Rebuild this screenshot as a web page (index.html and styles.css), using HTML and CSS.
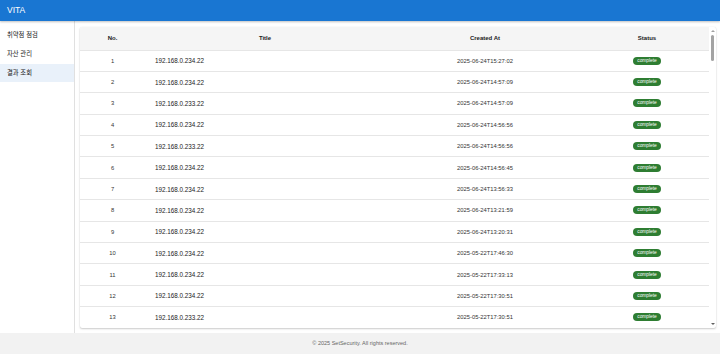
FILE: index.html
```html
<!DOCTYPE html>
<html lang="ko">
<head>
  <meta charset="UTF-8" />
  <meta name="viewport" content="width=device-width, initial-scale=1" />
  <title>VITA</title>
  <link rel="stylesheet" href="styles.css">
</head>
<body>
  <header class="appbar">VITA</header>

  <div class="layout">
    <nav class="sidebar">
      <a class="nav-item">취약점 점검</a>
      <a class="nav-item">자산 관리</a>
      <a class="nav-item active">결과 조회</a>
    </nav>

    <main class="main">
      <div class="table-box">
        <div class="table-scroll">
          <table class="results">
            <thead>
              <tr>
                <th class="col-no">No.</th>
                <th class="col-title">Title</th>
                <th class="col-date">Created At</th>
                <th class="col-status">Status</th>
              </tr>
            </thead>
            <tbody>
              <tr><td class="col-no">1</td><td class="col-title">192.168.0.234.22</td><td class="col-date">2025-06-24T15:27:02</td><td class="col-status"><span class="chip">complete</span></td></tr>
              <tr><td class="col-no">2</td><td class="col-title">192.168.0.234.22</td><td class="col-date">2025-06-24T14:57:09</td><td class="col-status"><span class="chip">complete</span></td></tr>
              <tr><td class="col-no">3</td><td class="col-title">192.168.0.233.22</td><td class="col-date">2025-06-24T14:57:09</td><td class="col-status"><span class="chip">complete</span></td></tr>
              <tr><td class="col-no">4</td><td class="col-title">192.168.0.234.22</td><td class="col-date">2025-06-24T14:56:56</td><td class="col-status"><span class="chip">complete</span></td></tr>
              <tr><td class="col-no">5</td><td class="col-title">192.168.0.233.22</td><td class="col-date">2025-06-24T14:56:56</td><td class="col-status"><span class="chip">complete</span></td></tr>
              <tr><td class="col-no">6</td><td class="col-title">192.168.0.234.22</td><td class="col-date">2025-06-24T14:56:45</td><td class="col-status"><span class="chip">complete</span></td></tr>
              <tr><td class="col-no">7</td><td class="col-title">192.168.0.234.22</td><td class="col-date">2025-06-24T13:56:33</td><td class="col-status"><span class="chip">complete</span></td></tr>
              <tr><td class="col-no">8</td><td class="col-title">192.168.0.234.22</td><td class="col-date">2025-06-24T13:21:59</td><td class="col-status"><span class="chip">complete</span></td></tr>
              <tr><td class="col-no">9</td><td class="col-title">192.168.0.234.22</td><td class="col-date">2025-06-24T13:20:31</td><td class="col-status"><span class="chip">complete</span></td></tr>
              <tr><td class="col-no">10</td><td class="col-title">192.168.0.234.22</td><td class="col-date">2025-05-22T17:46:30</td><td class="col-status"><span class="chip">complete</span></td></tr>
              <tr><td class="col-no">11</td><td class="col-title">192.168.0.234.22</td><td class="col-date">2025-05-22T17:33:13</td><td class="col-status"><span class="chip">complete</span></td></tr>
              <tr><td class="col-no">12</td><td class="col-title">192.168.0.234.22</td><td class="col-date">2025-05-22T17:30:51</td><td class="col-status"><span class="chip">complete</span></td></tr>
              <tr><td class="col-no">13</td><td class="col-title">192.168.0.233.22</td><td class="col-date">2025-05-22T17:30:51</td><td class="col-status"><span class="chip">complete</span></td></tr>
            </tbody>
          </table>
        </div>
        <div class="scrollbar">
          <span class="arrow up"></span>
          <div class="track"><span class="thumb"></span></div>
          <span class="arrow down"></span>
        </div>
      </div>
    </main>
  </div>

  <footer class="footer">© 2025 SetSecurity. All rights reserved.</footer>
</body>
</html>
```

FILE: styles.css
```css
* { box-sizing: border-box; }
html, body { height: 100%; }
body {
  margin: 0;
  font-family: "Liberation Sans", Arial, "Noto Sans CJK KR", sans-serif;
  color: #222;
  background: #fff;
  display: flex;
  flex-direction: column;
}
.appbar {
  height: 21px;
  flex: none;
  background: #1976d2;
  color: #fff;
  font-size: 8.5px;
  line-height: 21px;
  padding-left: 7px;
  box-shadow: 0 1px 2px rgba(0, 0, 0, 0.25);
  position: relative;
  z-index: 2;
}
.layout {
  flex: 1;
  display: flex;
  min-height: 0;
}
.sidebar {
  width: 75px;
  flex: none;
  border-right: 1px solid #e0e0e0;
  padding-top: 5px;
  display: flex;
  flex-direction: column;
}
.nav-item {
  height: 18px;
  line-height: 18px;
  padding-left: 7px;
  margin-bottom: 1px;
  font-size: 6.3px;
  color: #222;
  font-family: "Noto Sans CJK KR", sans-serif;
}
.nav-item.active { background: #e9f1fa; }
.main {
  flex: 1;
  min-width: 0;
  padding: 6px 4px 5px 5px;
  display: flex;
}
.table-box {
  flex: 1;
  display: flex;
  overflow: hidden;
  border-radius: 2px;
  box-shadow: 0 1px 2px rgba(0, 0, 0, 0.2), 0 0 1px rgba(0, 0, 0, 0.12);
}
.table-scroll {
  flex: 1;
  min-width: 0;
}
.scrollbar {
  width: 7px;
  flex: none;
  display: flex;
  flex-direction: column;
  align-items: center;
  padding: 2px 0;
}
.arrow {
  width: 0;
  height: 0;
  border-left: 2px solid transparent;
  border-right: 2px solid transparent;
}
.arrow.up { border-bottom: 2px solid #a0a0a0; margin: 1px 0 3px; }
.arrow.down { border-top: 2px solid #606060; margin: 3px 0 1px; }
.track {
  flex: 1;
  width: 3px;
}
.thumb {
  display: block;
  height: 26px;
  background: #a3a3a3;
  border-radius: 2px;
}
.results {
  width: 100%;
  border-collapse: collapse;
  table-layout: fixed;
}
.results th {
  height: 23px;
  background: #f5f5f5;
  font-size: 6px;
  font-weight: 700;
  color: #222;
  text-align: center;
  border-bottom: 1px solid #e6e6e6;
}
.results td {
  height: 21.4px;
  padding: 0;
  font-size: 5.8px;
  color: #333;
  text-align: center;
  border-bottom: 1px solid #e6e6e6;
}
.results .col-no { width: 65px; }
.results .col-title { width: 240px; }
.results .col-date { width: 200px; }
.results td.col-title {
  text-align: left;
  padding-left: 10px;
  font-size: 6.3px;
  color: #222;
}
.chip {
  display: inline-block;
  background: #2e7d32;
  color: #fff;
  font-size: 4.8px;
  line-height: 8px;
  padding: 0 4px;
  border-radius: 4px;
  vertical-align: middle;
}
.footer {
  height: 21px;
  flex: none;
  background: #f2f2f2;
  color: #666;
  font-size: 5.5px;
  line-height: 21px;
  text-align: center;
}
```
